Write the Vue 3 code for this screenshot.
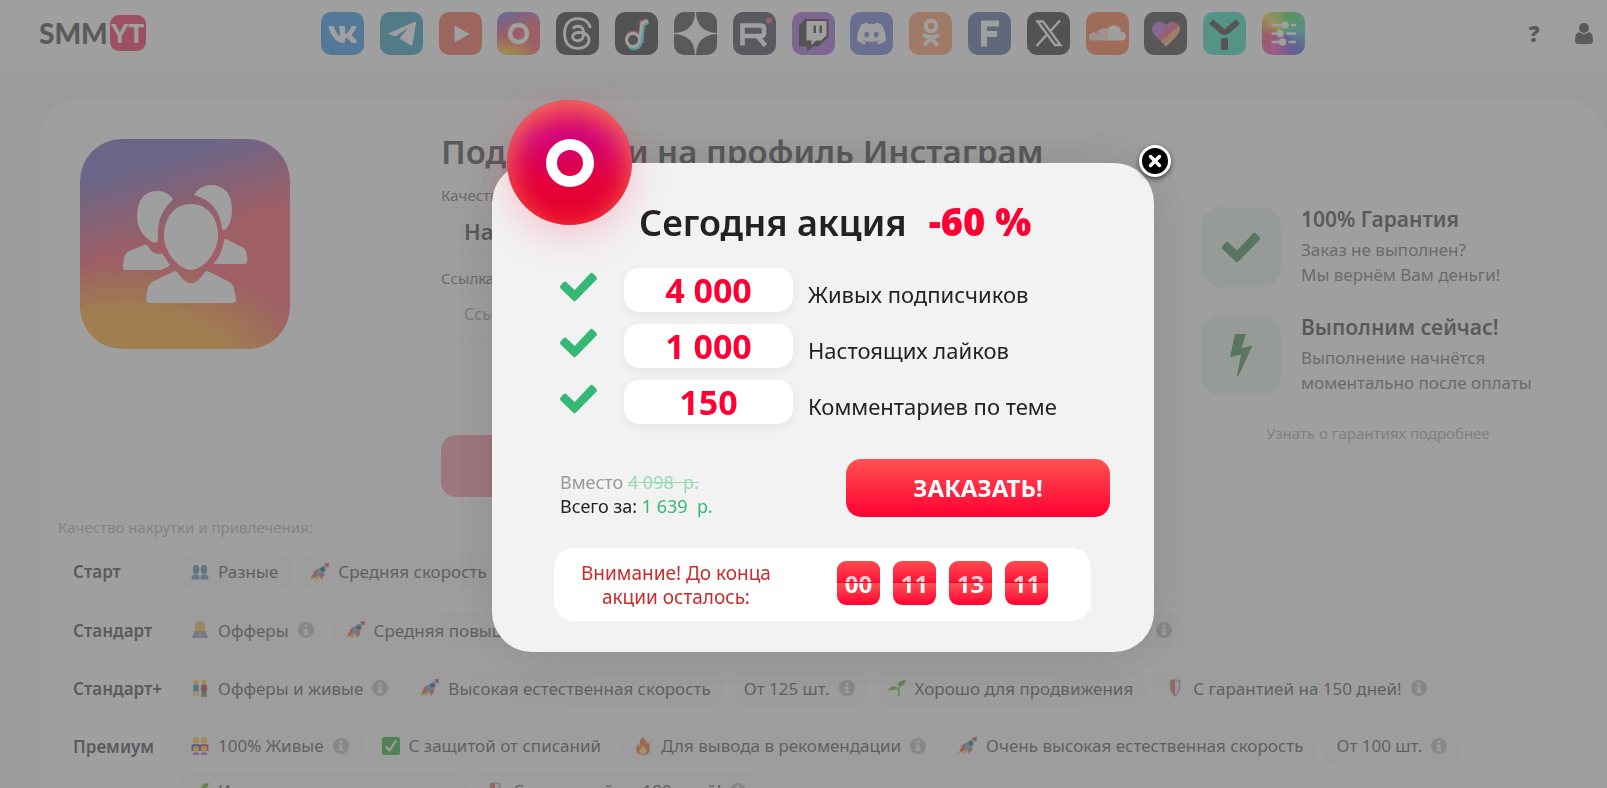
<template>
  <div class="page">
    <!-- Icon sprite -->
    <svg class="sprite" aria-hidden="true">
      <defs>
        <linearGradient id="heartFill" x1="0" y1="0" x2="1" y2="1">
          <stop offset=".4" stop-color="#b04fd8" />
          <stop offset=".4" stop-color="#e03a68" />
          <stop offset=".56" stop-color="#e03a68" />
          <stop offset=".56" stop-color="#f08a50" />
          <stop offset=".7" stop-color="#f08a50" />
          <stop offset=".7" stop-color="#f2c84a" />
        </linearGradient>
      </defs>
      <symbol id="vk" viewBox="0 0 43 43">
        <path transform="translate(.4 .5) scale(1.78)" fill="#fff" d="M19.376 17.123h-1.744c-.66 0-.864-.525-2.05-1.727-1.033-1-1.49-1.135-1.744-1.135-.356 0-.458.102-.458.593v1.575c0 .424-.135.678-1.253.678-1.846 0-3.896-1.118-5.335-3.202C4.624 10.857 4.03 8.57 4.03 8.096c0-.254.102-.491.593-.491h1.744c.44 0 .61.203.78.677.863 2.49 2.303 4.675 2.896 4.675.22 0 .322-.102.322-.66V9.721c-.068-1.186-.695-1.287-.695-1.71 0-.204.17-.407.44-.407h2.744c.373 0 .508.203.508.643v3.473c0 .372.17.508.271.508.22 0 .407-.136.813-.542 1.254-1.406 2.151-3.574 2.151-3.574.119-.254.322-.491.763-.491h1.744c.525 0 .644.27.525.643-.22 1.017-2.354 4.031-2.354 4.031-.186.305-.254.44 0 .78.186.254.796.779 1.203 1.253.745.847 1.32 1.558 1.473 2.05.17.49-.085.744-.576.744z" />
      </symbol>
      <symbol id="telegram" viewBox="0 0 43 43">
        <path fill="#fff" d="M8 21.5 34.2 9.9q2-.6 1.7 1.6l-3.4 21q-.5 1.7-2 .7L19.5 26.500 28.500 15.500 15.500 24.500Q11.500 23.500 8 21.500z" />
      </symbol>
      <symbol id="youtube" viewBox="0 0 43 43">
        <path fill="#fff" d="M15.500 13.500v17l15-8.500z" />
      </symbol>
      <symbol id="instagram" viewBox="0 0 43 43">
        <circle cx="21.500" cy="21.500" r="8.500" fill="none" stroke="#fff" stroke-width="4.500" />
      </symbol>
      <symbol id="threads" viewBox="0 0 43 43">
        <path transform="translate(5.200 5.200) scale(1.36)" fill="#fff" d="M12.186 24h-.007c-3.581-.024-6.334-1.205-8.184-3.509C2.35 18.44 1.5 15.586 1.472 12.01v-.017c.03-3.579.879-6.43 2.525-8.482C5.845 1.205 8.6.024 12.18 0h.014c2.746.02 5.043.725 6.826 2.098 1.677 1.29 2.858 3.13 3.509 5.467l-2.04.569c-1.104-3.96-3.898-5.984-8.304-6.015-2.91.022-5.11.936-6.54 2.717C4.307 6.504 3.616 8.914 3.589 12c.027 3.086.718 5.496 2.057 7.164 1.43 1.783 3.631 2.698 6.54 2.717 2.623-.02 4.358-.631 5.8-2.045 1.647-1.613 1.618-3.593 1.09-4.798-.31-.71-.873-1.3-1.634-1.75-.192 1.352-.622 2.446-1.284 3.272-.886 1.102-2.14 1.704-3.73 1.79-1.202.065-2.361-.218-3.259-.801-1.063-.689-1.685-1.74-1.752-2.964-.065-1.19.408-2.285 1.33-3.082.88-.76 2.119-1.207 3.583-1.291a13.853 13.853 0 0 1 3.02.142c-.126-.742-.375-1.332-.75-1.757-.513-.586-1.308-.883-2.359-.89h-.029c-.844 0-1.992.232-2.721 1.32L7.734 7.847c.98-1.454 2.568-2.256 4.478-2.256h.044c3.194.02 5.097 1.975 5.287 5.388.108.046.216.094.321.142 1.49.7 2.58 1.761 3.154 3.07.797 1.82.871 4.79-1.548 7.158-1.85 1.81-4.094 2.628-7.277 2.65Zm1.003-11.69c-.242 0-.487.007-.739.021-1.836.103-2.98.946-2.916 2.143.067 1.256 1.452 1.839 2.784 1.767 1.224-.065 2.818-.543 3.086-3.71a10.5 10.5 0 0 0-2.215-.221z" />
      </symbol>
      <symbol id="tiktok" viewBox="0 0 43 43">
        <g fill="none" stroke-width="3">
          <path stroke="#ff2d55" d="M23 21.500a7 7 0 1 0-9 11M25 29l1-19q3-1 5.500-2.500" />
          <path stroke="#25e8e0" d="M14 34.500a7 7 0 0 0 12-5M27 31l1.500-18q3-1 5-2.500" />
          <circle cx="18" cy="28" r="6.500" stroke="#fff" />
          <path stroke="#fff" d="M24.500 29 27 11q3-1 6-2.500" />
        </g>
      </symbol>
      <symbol id="dzen" viewBox="0 0 43 43">
        <path fill="#fff" d="M21 0h1q.5 20 21 21v1q-20.500 1-21 21h-1q-.5-20-21-21v-1q20.500-1 21-21z" />
      </symbol>
      <symbol id="rutube" viewBox="0 0 43 43">
        <path fill="none" stroke="#fff" stroke-width="4.600" d="M9.500 33.500V13.500h18q3.500 0 3.500 3v4.500q0 3-3.500 3H10M24 24l8.500 9.500" />
        <circle cx="36" cy="8.500" r="3" fill="#f5334c" />
      </symbol>
      <symbol id="twitch" viewBox="0 0 43 43">
        <path fill="#0e0e10" d="M7 13.500 13 7h23.500v18l-10 9.500h-5L15 39.500V34.500H7z" />
        <path fill="#fff" d="M14.500 9H34.500v14.500L29 28.500h-5l-4.500 4.500v-4.500h-5z" />
        <path fill="#0e0e10" d="M21.500 13.500h2.500v7.500h-2.500zM27.500 13.500h2.500v7.500h-2.500z" />
      </symbol>
      <symbol id="discord" viewBox="0 0 43 43">
        <path transform="translate(7.200 7.200) scale(1.19)" fill="#fff" d="M20.317 4.3698a19.7913 19.7913 0 00-4.8851-1.5152.0741.0741 0 00-.0785.0371c-.211.3753-.4447.8648-.6083 1.2495-1.8447-.2762-3.68-.2762-5.4868 0-.1636-.3933-.4058-.8742-.6177-1.2495a.077.077 0 00-.0785-.037 19.7363 19.7363 0 00-4.8852 1.515.0699.0699 0 00-.0321.0277C.5334 9.0458-.319 13.5799.0992 18.0578a.0824.0824 0 00.0312.0561c2.0528 1.5076 4.0413 2.4228 5.9929 3.0294a.0777.0777 0 00.0842-.0276c.4616-.6304.8731-1.2952 1.226-1.9942a.076.076 0 00-.0416-.1057c-.6528-.2476-1.2743-.5495-1.8722-.8923a.077.077 0 01-.0076-.1277c.1258-.0943.2517-.1923.3718-.2914a.0743.0743 0 01.0776-.0105c3.9278 1.7933 8.18 1.7933 12.0614 0a.0739.0739 0 01.0785.0095c.1202.099.246.1981.3728.2924a.077.077 0 01-.0066.1276 12.2986 12.2986 0 01-1.873.8914.0766.0766 0 00-.0407.1067c.3604.698.7719 1.3628 1.225 1.9932a.076.076 0 00.0842.0286c1.961-.6067 3.9495-1.5219 6.0023-3.0294a.077.077 0 00.0313-.0552c.5004-5.177-.8382-9.6739-3.5485-13.6604a.061.061 0 00-.0312-.0286zM8.02 15.3312c-1.1825 0-2.1569-1.0857-2.1569-2.419 0-1.3332.9555-2.4189 2.157-2.4189 1.2108 0 2.1757 1.0952 2.1568 2.419 0 1.3332-.9555 2.4189-2.1569 2.4189zm7.9748 0c-1.1825 0-2.1569-1.0857-2.1569-2.419 0-1.3332.9554-2.4189 2.1569-2.4189 1.2108 0 2.1757 1.0952 2.1568 2.419 0 1.3332-.946 2.4189-2.1568 2.4189Z" />
      </symbol>
      <symbol id="ok" viewBox="0 0 43 43">
        <g fill="none" stroke="#fff" stroke-width="4" stroke-linecap="round">
          <circle cx="22" cy="14" r="5.300" />
          <path d="M15.500 23.500q6.500 4 13 0M22 26l-5.500 6M22 26l5.500 6" />
        </g>
      </symbol>
      <symbol id="fb" viewBox="0 0 43 43">
        <path fill="none" stroke="#fff" stroke-width="6" d="M16 34.500V11.500H31M16 22H29" />
      </symbol>
      <symbol id="x" viewBox="0 0 43 43">
        <path fill="none" stroke="#fff" stroke-width="2.400" d="M10.500 9.500h5.500l17.500 23.500H28zM33 8.500 23 19.500M9.500 34 19.500 23" />
      </symbol>
      <symbol id="soundcloud" viewBox="0 0 43 43">
        <path fill="#fff" d="M22.500 16q3-3.500 7-2.500 5 1 5.500 6.500 5-.5 5 4 0 4.500-4.500 4.500h-13z" />
        <path stroke="#fff" stroke-width="1.500" d="M4 22.500v5M6 21v7.500M8 20v8.500M10 21.500v7M12 19v9.500M14 17.500v11M16 16.500v12M18 16.500v12M20 17v11.500M22 16v12.500" />
      </symbol>
      <symbol id="likee" viewBox="0 0 43 43">
        <path fill="url(#heartFill)" d="M22 34.500 10 22.500Q6 17 10 12q6-5 12 1 6-6 12-1 4 5 0 10.500z" />
      </symbol>
      <symbol id="yappy" viewBox="0 0 43 43">
        <path fill="none" stroke="#111" stroke-width="6" stroke-linejoin="round" d="M8 9.500 19 19q2.500 2 5 0L35 9.500" />
        <rect x="18" y="26" width="7" height="12" rx="1" fill="#111" />
      </symbol>
      <symbol id="filters" viewBox="0 0 43 43">
        <path stroke="#fff" stroke-width="2.400" stroke-linecap="round" d="M10.500 13h11M30 13h3M10.500 21.500h5M25.500 21.500H33M10.500 30h7M27.500 30H33" />
        <g fill="#fff"><circle cx="23" cy="13" r="3.800" /><circle cx="18" cy="21.500" r="3.800" /><circle cx="20.500" cy="30" r="3.800" /></g>
      </symbol>
      <symbol id="check" viewBox="0 0 40 31">
        <path d="M4.500 10.500q1.500-1.500 3 0l8.500 8L32 1.500q1.500-1.500 3 0l3.500 3.500q1.500 1.500 0 3L17.500 29.500q-1.500 1.500-3 0L1.500 17q-1.500-1.500 0-3z" />
      </symbol>
      <symbol id="bolt" viewBox="0 0 24 44">
        <path d="M6 1h11L12.500 15 23.500 12.500 9.500 43H8L12 21.500 1 24z" />
      </symbol>
      <symbol id="info" viewBox="0 0 16 16">
        <circle cx="8" cy="8" r="8" fill="#b0b0b0" />
        <path fill="#f8f8f8" d="M6.500 2.500h3v2.500h-3zM5.500 6.500h4v4.500h1v2h-5v-2h1V8.500h-1z" />
      </symbol>
      <symbol id="rocket" viewBox="0 0 18 18">
        <path fill="#ffae10" d="M0 14 3.500 10 8 14.500 4 18 4.500 14.500 0 17z" />
        <path fill="#f02a20" d="M2 9.500 6 6l3 2-4 4zM9 13l3-4 1.500 3-3.500 5zM1 12l4-2 2 2-5 3z" />
        <path fill="#6090b0" d="M4.500 10Q9 1.500 15 2.500 16.500 9 8 14z" />
        <path fill="#c01828" d="M13 .8 18 0l-.8 5z" />
        <circle cx="11.500" cy="6.500" r="2" fill="#0a2a48" />
      </symbol>
      <symbol id="silhouettes" viewBox="0 0 18 18">
        <g fill="#3a78a4"><ellipse cx="5" cy="6.500" rx="3.300" ry="4.500" /><path d="M.5 16.500q-.5-5 4.500-5 4 0 3.500 5z" /><ellipse cx="13" cy="6.500" rx="3.300" ry="4.500" /><path d="M9.500 16.500q-.5-5 3.500-5 5 0 4.500 5z" /></g>
      </symbol>
      <symbol id="coder" viewBox="0 0 18 18">
        <path fill="#6670c0" d="M1.500 17q0-5 4-5h7q4 0 4 5z" />
        <circle cx="9" cy="6.500" r="5.300" fill="#ffbc10" />
        <path fill="#d0a070" d="M3.500 6Q4 .5 9 .5T14.500 6Q12 3 9 3.500 6 3 3.500 6z" />
        <rect x="3" y="10" width="12" height="7" rx="1" fill="#858b92" />
        <circle cx="9" cy="13.500" r=".7" fill="#fff" />
      </symbol>
      <symbol id="pair" viewBox="0 0 18 18">
        <g fill="#ffb710"><circle cx="5" cy="3" r="2.500" /><circle cx="13" cy="3" r="2.500" /><path d="M2 11h2v6H2zM5.500 11h2v6h-2z" /></g>
        <path fill="#1080c8" d="M2.500 5.500h5l.5 7H2z" />
        <path fill="#a81828" d="M10.500 5.500h5l1 5.500h-7z" />
        <path fill="#493c3c" d="M10.500 11h5v7h-2l-.5-5-.5 5h-2z" />
      </symbol>
      <symbol id="family" viewBox="0 0 18 18">
        <g fill="#ffb710"><circle cx="5" cy="3.500" r="3.300" /><circle cx="13" cy="3.500" r="3.300" /></g>
        <path fill="#2030a0" d="M.5 8q0-1 4-1 4.500 0 4.500 1v6H.5z" />
        <path fill="#b81838" d="M9 8q0-1 4-1 4.500 0 4.500 1v6H9z" />
        <g fill="#ffc420"><circle cx="5" cy="12" r="3" /><circle cx="13" cy="12" r="3" /></g>
        <path fill="#b05ac8" d="M1.500 18q0-3 3.500-3t3.500 3zM9.500 18q0-3 3.500-3t3.500 3z" />
      </symbol>
      <symbol id="tick" viewBox="0 0 18 18">
        <rect width="18" height="18" rx="2.500" fill="#00a010" />
        <path fill="none" stroke="#fff" stroke-width="2.200" d="m4 9.500 3.500 4L14 3.500" />
      </symbol>
      <symbol id="sprout" viewBox="0 0 18 18">
        <path fill="none" stroke="#59a51c" stroke-width="1.500" d="M10.500 17Q12 12 9 9.500M10.500 12q.5-5 4-8" />
        <path fill="#4ca500" d="M0 11q5-7 10-2Q6 12 0 11zM9.500 7Q10.500 1 18 1q-1.500 7-7 6z" />
      </symbol>
      <symbol id="shield" viewBox="0 0 18 18">
        <path fill="#8a8e92" d="M3.500 1.500q5.500-2.500 11 0 .5 12-5.500 16.500Q3 13.500 3.500 1.500z" />
        <path fill="#e84028" d="M5 2.500Q7 1.500 9 1.500v15Q4.500 12 5 2.500z" />
        <path fill="#e8e8e8" d="M9 1.500q2 0 4 1 .5 9.500-4 14z" />
      </symbol>
      <symbol id="fire" viewBox="0 0 18 18">
        <path fill="#f85010" d="M8 0q5 3 4.500 7Q14 6 13.500 4q3 4 2.500 8-.5 6-7 6t-7-6q0-3 2-5 0 2 1.500 2.500Q5 5 8 0z" />
        <path fill="#ffd040" d="M9 8q1 2 2.500 3.500Q13 13 12.500 15q-1 2.500-3.500 2.500T5.500 15q-.5-2 1-3.500Q9 10 9 8z" />
      </symbol>
    </svg>

    <!-- Header -->
    <header class="header">
      <a href="#" class="logo"><span class="logo-smm">SMM</span><span class="logo-yt">YT</span></a>
      <nav class="socials">
        <a v-for="name in socials" :key="name" href="#" class="social" :class="name" :aria-label="name">
          <svg><use :href="'#' + name" /></svg>
        </a>
      </nav>
      <div class="header-actions">
        <button type="button" class="header-btn">?</button>
        <button type="button" class="header-btn" aria-label="Профиль">
          <svg width="18" height="21" viewBox="0 0 18 21" fill="#222">
            <circle cx="9" cy="5" r="5" />
            <path d="M4 9q5 4 10 0 4 1 4 8 0 4-3.500 4h-11Q0 21 0 17q0-7 4-8z" />
          </svg>
        </button>
      </div>
    </header>

    <!-- Service card -->
    <main class="card">
      <div class="service">
        <div class="service-icon">
          <svg viewBox="0 0 210 210" fill="#fff">
            <path d="M111 65c16 0 27 13 27 32 0 16-15 34-27 34s-27-18-27-34c0-19 11-32 27-32z" />
            <path d="M95 132q2 0 3.500 3 7 9.500 12.500 9.500t12.500-9.500q1.500-3 4-3l22 11q4 3 4.500 7l2 10q.5 4-4 4H70q-4.500 0-4-4l1.500-9q.5-5 4.500-8z" />
            <path d="M77 52q11 0 16 8.500-17 15-15 40-1 4-5 3-16-9-16-27 1-24 20-24.500z" />
            <path d="M114 56q6-10 17-10 21 1 21 25 0 12-6 19-3 3-4-1-3-26-28-33z" />
            <path d="M64 106q3-1 5 3 7 9 13 5l8 12q-4 4-9 5H46q-4 0-3-5l1-7q1-5 5-7z" />
            <path d="M146 100l16 8q4 2 4.500 6l1 6q0 5-4 5H135q-2-1 0-2 7-8 9-21 0-2 2-2z" />
          </svg>
        </div>

        <form class="order-form" @submit.prevent>
          <h1>Подписчики на профиль Инстаграм</h1>
          <label for="quality">Качество:</label>
          <select id="quality" v-model="quality">
            <option value="real">Настоящие</option>
          </select>
          <label for="link">Ссылка на профиль:</label>
          <input id="link" v-model="link" type="text" placeholder="Ссылка">
          <button type="submit" class="order-btn">Заказать</button>
        </form>

        <aside class="benefits">
          <div v-for="item in benefits" :key="item.title" class="benefit">
            <span class="benefit-icon"><svg :class="item.icon"><use :href="'#' + item.icon" /></svg></span>
            <div>
              <h2>{{ item.title }}</h2>
              <p>{{ item.first }}<br>{{ item.second }}</p>
            </div>
          </div>
          <a href="#" class="benefits-link">Узнать о гарантиях подробнее</a>
        </aside>
      </div>

      <p class="quality-title">Качество накрутки и привлечения:</p>
      <table class="tariffs">
        <tbody>
          <tr v-for="tariff in tariffs" :key="tariff.name">
            <th scope="row">{{ tariff.name }}</th>
            <td>
              <div class="chips">
                <span v-for="chip in tariff.chips" :key="chip.text" class="chip">
                  <svg v-if="chip.icon" class="emoji"><use :href="'#' + chip.icon" /></svg>
                  {{ chip.text }}
                  <svg v-if="chip.info" class="info"><use href="#info" /></svg>
                </span>
              </div>
            </td>
          </tr>
        </tbody>
      </table>
    </main>

    <!-- Promo popup -->
    <div v-if="isOpen" class="overlay">
      <section class="popup" role="dialog" aria-labelledby="promo-title">
        <div class="popup-badge"></div>
        <button type="button" class="popup-close" aria-label="Закрыть" @click="isOpen = false">
          <svg width="14" height="14" viewBox="0 0 14 14"><path d="m2.500 2.500 9 9m0-9-9 9" stroke="#fff" stroke-width="3.500" stroke-linecap="round" /></svg>
        </button>

        <h2 id="promo-title">Сегодня акция <strong>-60 %</strong></h2>

        <ul class="offers">
          <li v-for="offer in offers" :key="offer.label">
            <svg class="offer-check"><use href="#check" /></svg>
            <strong>{{ offer.count }}</strong>
            <span>{{ offer.label }}</span>
          </li>
        </ul>

        <div class="buy">
          <p>
            <span class="old">Вместо <s>4 098 &nbsp;р.</s></span><br>
            Всего за: <span class="price">1 639 &nbsp;р.</span>
          </p>
          <button type="button" class="buy-btn">ЗАКАЗАТЬ!</button>
        </div>

        <div class="timer">
          <p>Внимание! До конца<br>акции осталось:</p>
          <div class="digits">
            <span v-for="(part, i) in timeLeft" :key="i">{{ part }}</span>
          </div>
        </div>
      </section>
    </div>
  </div>
</template>

<script setup>
import { ref } from 'vue'

const isOpen = ref(true)
const quality = ref('real')
const link = ref('')
const timeLeft = ref(['00', '11', '13', '11'])

const socials = [
  'vk', 'telegram', 'youtube', 'instagram', 'threads', 'tiktok', 'dzen', 'rutube', 'twitch',
  'discord', 'ok', 'fb', 'x', 'soundcloud', 'likee', 'yappy', 'filters'
]

const benefits = [
  { icon: 'check', title: '100% Гарантия', first: 'Заказ не выполнен?', second: 'Мы вернём Вам деньги!' },
  { icon: 'bolt', title: 'Выполним сейчас!', first: 'Выполнение начнётся', second: 'моментально после оплаты' }
]

const offers = [
  { count: '4 000', label: 'Живых подписчиков' },
  { count: '1 000', label: 'Настоящих лайков' },
  { count: '150', label: 'Комментариев по теме' }
]

const tariffs = [
  {
    name: 'Старт',
    chips: [
      { icon: 'silhouettes', text: 'Разные' },
      { icon: 'rocket', text: 'Средняя скорость' }
    ]
  },
  {
    name: 'Стандарт',
    chips: [
      { icon: 'coder', text: 'Офферы', info: true },
      { icon: 'rocket', text: 'Средняя повышенная скорость' },
      { icon: 'sprout', text: 'Хорошо для продвижения' },
      { icon: 'shield', text: 'С гарантией 60 дней!', info: true }
    ]
  },
  {
    name: 'Стандарт+',
    chips: [
      { icon: 'pair', text: 'Офферы и живые', info: true },
      { icon: 'rocket', text: 'Высокая естественная скорость' },
      { text: 'От 125 шт.', info: true },
      { icon: 'sprout', text: 'Хорошо для продвижения' },
      { icon: 'shield', text: 'С гарантией на 150 дней!', info: true }
    ]
  },
  {
    name: 'Премиум',
    chips: [
      { icon: 'family', text: '100% Живые', info: true },
      { icon: 'tick', text: 'С защитой от списаний' },
      { icon: 'fire', text: 'Для вывода в рекомендации', info: true },
      { icon: 'rocket', text: 'Очень высокая естественная скорость' },
      { text: 'От 100 шт.', info: true },
      { icon: 'sprout', text: 'Идеально для продвижения' },
      { icon: 'shield', text: 'С гарантией на 180 дней!', info: true }
    ]
  }
]
</script>

<style>
body {
  margin: 0;
}
</style>

<style scoped>
*,
*::after {
  box-sizing: border-box;
}

.page {
  height: 100vh;
  overflow: hidden;
  background: #f2f2f2;
  color: #222;
  font-family: "Noto Sans", "Open Sans", sans-serif;
  font-size: 16px;
}

h1,
h2,
p,
ul {
  margin: 0;
  padding: 0;
}

a {
  color: inherit;
  text-decoration: none;
}

button {
  border: none;
  padding: 0;
  font-family: inherit;
  cursor: pointer;
}

.sprite {
  position: absolute;
  width: 0;
  height: 0;
}

/* Header */
.header {
  display: flex;
  align-items: center;
  height: 72px;
  padding: 0 6px 6px 39px;
  background: #fff;
}

.logo {
  display: flex;
  flex: 1;
  align-items: center;
  gap: 2px;
  font-family: Lato, sans-serif;
  font-weight: 900;
  font-size: 28px;
}

.logo-yt {
  display: flex;
  align-items: center;
  justify-content: center;
  width: 36px;
  height: 36px;
  border-radius: 9px;
  background: #f5003c;
  color: #fff;
  font-size: 26px;
}

.socials {
  display: flex;
  justify-content: space-between;
  flex: 0 1 984px;
  margin-right: 14px;
}

.social {
  width: 43px;
  height: 43px;
  border-radius: 10px;
  overflow: hidden;
}

.social svg {
  display: block;
  width: 43px;
  height: 43px;
}

.vk { background: #0a80e8; }
.telegram { background: #0888b0; }
.youtube { background: #f5452a; }
.instagram {
  background: radial-gradient(ellipse 80% 50% at 20% 105%, #ffb800 0 25%, transparent), linear-gradient(160deg, #5b51d8 5%, #f5334c 45%);
}
.threads,
.tiktok,
.x { background: #0c0c0c; }
.dzen { background: #222228; }
.rutube { background: #182337; }
.twitch { background: #9548d8; }
.discord { background: #5560d0; }
.ok { background: #ff8b4a; }
.fb { background: #35508f; }
.soundcloud { background: #ff5c22; }
.likee { background: #1c1c1c; }
.yappy { background: #10d8b0; }
.filters {
  background: conic-gradient(#28d838 20deg, #20c8b0 80deg, #3040d8 135deg, #7828d0 165deg, #f020b0 205deg, #f02850 265deg, #e8d020 315deg, #28d838 380deg);
}

.header-actions {
  display: flex;
  flex: 1;
  justify-content: flex-end;
  gap: 16px;
}

.header-btn {
  display: flex;
  align-items: center;
  justify-content: center;
  width: 34px;
  height: 34px;
  border-radius: 10px;
  background: #fafafa;
  color: #222;
  font-size: 22px;
  font-weight: 900;
}

/* Service card */
.card {
  margin: 28px 0 0 39px;
  padding: 0 40px 0 19px;
  height: 900px;
  border-radius: 40px 40px 0 0;
  background: #fff;
}

.service {
  display: grid;
  grid-template-columns: 361px 1fr 366px;
  padding: 31px 0 0 22px;
}

.service-icon {
  width: 210px;
  height: 210px;
  margin-top: 8px;
  border-radius: 42px;
  background: radial-gradient(ellipse 95% 50% at 22% 108%, #ff9500 0 52%, rgba(255, 120, 40, 0)), linear-gradient(163deg, #5548b4 16%, #fb3049 47%);
}

.service-icon svg {
  display: block;
}

.order-form {
  display: flex;
  flex-direction: column;
  padding-right: 60px;
}

.order-form h1 {
  margin-bottom: 10px;
  font-size: 33px;
  line-height: 42px;
  font-weight: 600;
  white-space: nowrap;
}

.order-form label {
  color: #555;
  font-size: 15px;
  line-height: 24px;
}

.order-form select,
.order-form input {
  height: 48px;
  margin-bottom: 11px;
  padding: 0 22px;
  border: 1px solid #f0f0f0;
  border-radius: 14px;
  background: #fff;
  color: #222;
  font-family: inherit;
  font-size: 16px;
}

.order-form select {
  appearance: none;
  font-size: 22px;
  font-weight: 600;
}

.order-form input::placeholder {
  color: #888;
}

.order-btn {
  height: 62px;
  margin-top: 86px;
  border-radius: 15px;
  background: #ff7f98;
  color: #fff;
  font-size: 22px;
}

.benefits {
  padding-top: 76px;
}

.benefit {
  display: flex;
  gap: 20px;
  margin-bottom: 28px;
}

.benefit-icon {
  display: flex;
  align-items: center;
  justify-content: center;
  width: 80px;
  height: 80px;
  border-radius: 20px;
  background: #e4f2e8;
}

.benefit-icon svg {
  width: 40px;
  height: 31px;
  fill: #1c7c30;
}

.benefit-icon .bolt {
  width: 24px;
  height: 44px;
}

.benefit h2 {
  margin-bottom: 6px;
  font-size: 21px;
  line-height: 24px;
  font-weight: 600;
}

.benefit p {
  color: #555;
  font-size: 17px;
  line-height: 25px;
}

.benefits-link {
  display: block;
  width: 354px;
  color: #999;
  font-size: 15px;
  line-height: 20px;
  text-align: center;
}

.quality-title {
  margin: 19px 0 5px;
  color: #a4a4a4;
  font-size: 15px;
  line-height: 22px;
}

.tariffs {
  width: 100%;
  border-collapse: collapse;
}

.tariffs tr {
  height: 58px;
  border-bottom: 1px solid #f7f7f7;
}

.tariffs th {
  width: 119px;
  padding: 18px 0 0 15px;
  font-size: 17px;
  line-height: 22px;
  font-weight: 600;
  text-align: left;
  vertical-align: top;
}

.tariffs td {
  padding: 10px 0;
}

.chips {
  display: flex;
  flex-wrap: wrap;
  gap: 9px 5px;
}

.chip {
  display: flex;
  align-items: center;
  gap: 9px;
  height: 36px;
  padding: 0 14px;
  border-radius: 14px;
  background: #f9f9f9;
  color: #333;
  font-size: 17px;
  white-space: nowrap;
}

.emoji {
  width: 18px;
  height: 18px;
}

.info {
  width: 16px;
  height: 16px;
}

/* Promo popup */
.overlay {
  position: fixed;
  inset: 0;
  display: flex;
  align-items: center;
  justify-content: center;
  padding: 27px 0 0 39px;
  background: rgba(116, 116, 116, 0.69);
}

.popup {
  position: relative;
  width: 662px;
  padding: 33px 63px 31px 62px;
  border-radius: 40px;
  background: #f2f2f2;
  box-shadow: 0 0 60px rgba(0, 0, 0, 0.12);
}

.popup-badge {
  position: absolute;
  top: -63px;
  left: 15px;
  display: flex;
  align-items: center;
  justify-content: center;
  width: 125px;
  height: 125px;
  border-radius: 50%;
  background: linear-gradient(#d8006e 15%, #d2007a 30%, #e4003c 65%, #e80028);
  box-shadow: 0 10px 40px rgba(255, 0, 60, 0.2), inset 0 10px 30px rgba(250, 125, 80, 0.95);
}

.popup-badge::after {
  content: "";
  width: 48px;
  height: 48px;
  border: 11px solid #fff;
  border-radius: 50%;
}

.popup-close {
  position: absolute;
  top: -18px;
  right: -17px;
  display: flex;
  align-items: center;
  justify-content: center;
  width: 32px;
  height: 32px;
  border: 3px solid #fff;
  border-radius: 50%;
  background: #000;
  box-shadow: 0 2px 5px rgba(0, 0, 0, 0.6);
}

.popup h2 {
  display: flex;
  align-items: baseline;
  gap: 22px;
  padding-left: 85px;
  font-size: 36px;
  line-height: 50px;
  font-weight: 600;
}

.popup h2 strong {
  color: #ff0032;
  font-size: 38px;
}

.offers {
  display: flex;
  flex-direction: column;
  gap: 12px;
  padding: 20px 0 35px 5px;
  list-style: none;
}

.offers li {
  display: flex;
  align-items: center;
  height: 44px;
}

.offer-check {
  width: 39px;
  height: 30px;
  margin: 0 26px 6px 0;
  fill: #36b876;
}

.offers strong {
  width: 169px;
  border-radius: 15px;
  background: #fff;
  box-shadow: 0 3px 10px rgba(0, 0, 0, 0.06);
  color: #ff0032;
  font-size: 34px;
  line-height: 44px;
  text-align: center;
}

.offers span {
  padding: 7px 0 0 15px;
  font-size: 22px;
  line-height: 30px;
}

.buy {
  display: flex;
  justify-content: space-between;
  margin-right: -19px;
  padding-left: 6px;
}

.buy p {
  padding-top: 11px;
  font-size: 18px;
  line-height: 24px;
}

.old {
  color: #999;
}

.old s {
  color: #98dab8;
}

.price {
  color: #36b876;
}

.buy-btn {
  width: 264px;
  height: 58px;
  border-radius: 15px;
  background: linear-gradient(#ff5252, #ff0032);
  color: #fff;
  font-size: 24px;
  font-weight: 700;
  line-height: 56px;
}

.timer {
  display: flex;
  align-items: center;
  justify-content: space-between;
  height: 73px;
  margin-top: 30px;
  padding: 0 43px 0 27px;
  border-radius: 20px;
  background: #fff;
}

.timer p {
  color: #cc2b2b;
  font-size: 19px;
  line-height: 24px;
  text-align: center;
}

.digits {
  display: flex;
  gap: 13px;
  margin-bottom: 4px;
}

.digits span {
  position: relative;
  width: 43px;
  height: 44px;
  border-radius: 9px;
  overflow: hidden;
  background: linear-gradient(#ff5252, #ff0032) 0 0 / 100% 50%;
  color: #fff;
  font-size: 24px;
  line-height: 46px;
  font-weight: 700;
  text-align: center;
}

.digits span::after {
  content: "";
  position: absolute;
  inset: 0 0 50%;
  border-bottom: 1px solid #ff0032;
  background: rgba(255, 60, 70, 0.25);
}
</style>
